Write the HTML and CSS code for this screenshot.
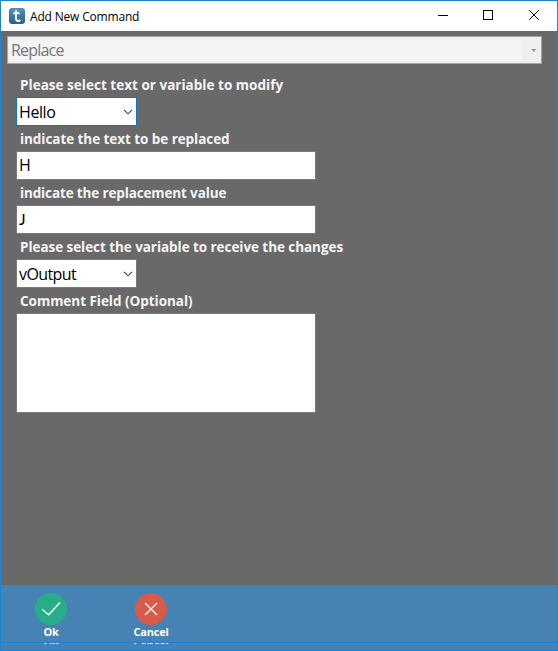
FILE: index.html
```html
<!DOCTYPE html>
<html lang="en">
<head>
<meta charset="utf-8">
<title>Add New Command</title>
<link rel="stylesheet" href="styles.css">
</head>
<body>
<div class="window">
  <header class="titlebar">
    <svg class="logo" width="16" height="16" viewBox="0 0 16 16">
      <defs><linearGradient id="g" x1="0" y1="0" x2="0" y2="1"><stop offset="0" stop-color="#5590bf"/><stop offset="1" stop-color="#2b618f"/></linearGradient></defs>
      <rect width="16" height="16" rx="3" fill="url(#g)"/>
      <path d="M4.3 5.2H10.6M7 2V10.5Q7 13 9 13Q10.4 13 11.3 12" fill="none" stroke="#fff" stroke-width="1.9"/>
    </svg>
    <span class="title">Add New Command</span>
    <svg class="controls" width="120" height="30" viewBox="0 0 120 30" fill="none" stroke="#000">
      <path d="M1 14.5H11"/>
      <rect x="46.5" y="9.5" width="9" height="9"/>
      <path d="M92.2 9.2L101.8 18.8M101.8 9.2L92.2 18.8"/>
    </svg>
  </header>
  <main class="content">
    <div class="command"><span class="command-text">Replace</span><span class="command-arrow"><svg width="6" height="3" viewBox="0 0 6 3"><path d="M0 0H5.5L2.75 3Z" fill="#999"/></svg></span></div>
    <div class="form">
      <div class="label l1"><span>Please select text or variable to modify</span></div>
      <div class="field combo focused"><span class="hello">Hello</span><svg width="10" height="6" viewBox="0 0 10 6"><path d="M1 .8L5 4.8L9 .8" fill="none" stroke="#444" stroke-width="1.1"/></svg></div>
      <div class="label l2"><span>indicate the text to be replaced</span></div>
      <div class="field">H</div>
      <div class="label l3"><span>indicate the replacement value</span></div>
      <div class="field short-j">J</div>
      <div class="label l4"><span>Please select the variable to receive the changes</span></div>
      <div class="field combo"><span class="output">vOutput</span><svg width="10" height="6" viewBox="0 0 10 6"><path d="M1 .8L5 4.8L9 .8" fill="none" stroke="#444" stroke-width="1.1"/></svg></div>
      <div class="label l5"><span>Comment Field (Optional)</span></div>
      <div class="field comment"></div>
    </div>
  </main>
  <footer class="footer">
    <div class="actions">
      <div class="action">
        <svg width="32" height="32" viewBox="0 0 32 32"><circle cx="16" cy="16" r="16" fill="#27ae88"/><path d="M7 16.2L13.7 21.8L25 9.5" fill="none" stroke="#fff" stroke-width="1.3"/></svg>
        <span>Ok</span>
      </div>
      <div class="action">
        <svg width="32" height="32" viewBox="0 0 32 32"><circle cx="16" cy="16" r="16" fill="#d75a4a"/><path d="M10 10L22 22M22 10L10 22" fill="none" stroke="#fff" stroke-width="1.3"/></svg>
        <span>Cancel</span>
      </div>
    </div>
    <div class="echo"><span>Ok</span><span>Cancel</span></div>
  </footer>
</div>
</body>
</html>
```

FILE: styles.css
```css
* { box-sizing: border-box; }
body { margin: 0; font-family: "Open Sans", "Noto Sans", sans-serif; }
svg { display: block; flex: none; }
.window { width: 558px; height: 651px; border: 1px solid #1883d7; display: flex; flex-direction: column; overflow: hidden; }
.titlebar { height: 30px; flex: none; background: #fff; display: flex; align-items: center; padding-left: 8px; }
.logo { margin-bottom: 1px; }
.title { font-size: 12px; margin-left: 5px; letter-spacing: -.18px; color: #000; white-space: nowrap; }
.controls { margin-left: auto; }
.content { height: 554px; flex: none; background: #696969; padding: 5px 15px 0 6px; }
.command { width: 535px; height: 28px; border: 1px solid #a5a5a5; background: #efefef; padding: 2px 0 2px 1px; display: flex; }
.command-text { width: 513px; background: #f4f4f4; padding-left: 2px; font-size: 16px; line-height: 23px; color: #767676; letter-spacing: -.8px; }
.command-arrow { flex: 1; display: flex; align-items: center; justify-content: center; padding-left: 4px; }
.form { padding-left: 9px; padding-top: 8px; }
.label { height: 25px; padding-left: 4px; color: #f5f5f5; font-weight: 700; font-size: 13.5px; line-height: 27px; white-space: nowrap; }
.l1 { letter-spacing: .02px; }
.l2 { letter-spacing: -.06px; }
.l3 { letter-spacing: -.14px; }
.l4 { letter-spacing: -.06px; }
.l5 { letter-spacing: -.03px; }
.field { width: 300px; height: 29px; background: #fff; border: 1px solid #7a7a7a; color: #000; font-size: 16px; line-height: 26px; padding-left: 2px; }
.short-j { font-family: Lato, "Open Sans", sans-serif; font-size: 15.5px; }
.combo { width: 121px; display: flex; justify-content: space-between; align-items: center; padding-right: 3px; }
.focused { border-color: #0078d7; }
.hello { letter-spacing: -.4px; }
.output { letter-spacing: -.6px; }
.comment { height: 100px; }
.footer { height: 65px; flex: none; background: #4682b4; color: #fff; font-weight: 700; font-size: 11px; letter-spacing: -.2px; }
.actions { height: 58px; padding: 8px 0 0; display: flex; border-bottom: 1px solid #1883d7; }
.action { width: 100px; display: flex; flex-direction: column; align-items: center; line-height: 13px; }
.echo { height: 1px; overflow: hidden; display: flex; line-height: 15px; }
.echo span { width: 100px; text-align: center; margin-top: -6px; }
```
